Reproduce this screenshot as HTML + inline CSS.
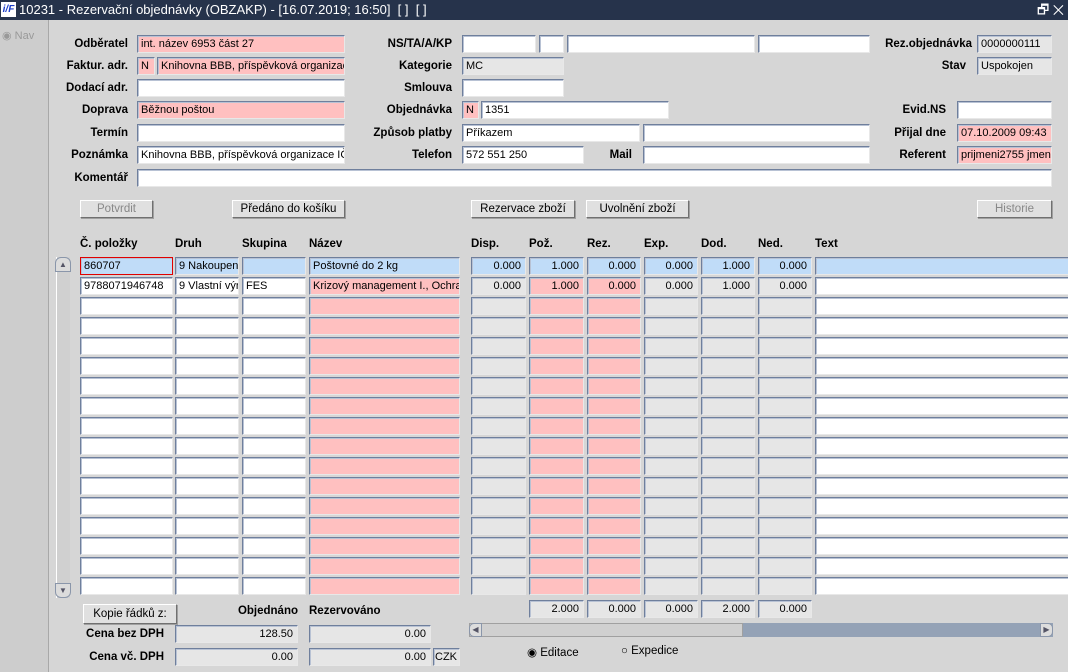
<!DOCTYPE html>
<html><head><meta charset="utf-8"><style>
*{box-sizing:border-box;margin:0;padding:0}
body{width:1068px;height:672px;overflow:hidden;background:#d6d6d6;font-family:"Liberation Sans",Arial,sans-serif;font-size:12px;position:relative;color:#000}
#title{position:absolute;left:0;top:0;width:1068px;height:20px;background:#26334b;color:#fff;font-size:13px;line-height:20px;padding-left:19px}
#logo{position:absolute;left:1px;top:2px;width:15px;height:15px;background:#fff;color:#1a3cc8;font-weight:bold;font-style:italic;font-size:10px;line-height:15px;text-align:center}
#left{position:absolute;left:0;top:20px;width:49px;height:652px;background:#cdcdcd;border-right:1px solid #a8a8a8}
.f{position:absolute;height:18px;background:#fff;border:1px solid;border-color:#6f7f9c #e8e8e8 #e8e8e8 #6f7f9c;box-shadow:inset 1px 1px 0 #b8c2d4;padding-left:3px;line-height:16px;font-size:11px;white-space:nowrap;overflow:hidden}
.p{background:#ffc0c0}.g{background:#e6e6e6}.b{background:#c0dcf8}
.r{text-align:right;padding-right:4px}
.l{position:absolute;font-weight:bold;font-size:11.5px;white-space:nowrap;line-height:18px}
.lr{text-align:right}
.btn{position:absolute;height:18px;background:#e0e0e0;border:1px solid;border-color:#fff #707070 #707070 #fff;box-shadow:1px 1px 0 #a0a0a0;text-align:center;line-height:16px;font-size:11.5px}
.dis{color:#888}
.h{position:absolute;top:238px;font-weight:bold;font-size:11.5px}
</style></head><body>
<div id="title"><div id="logo">i/F</div>10231 - Rezervační objednávky (OBZAKP) - [16.07.2019; 16:50] &nbsp;[ ] &nbsp;[ ]<span style="position:absolute;right:4px;top:0;font-size:13px">🗗 ✕</span></div>
<div id="left"><span style="position:absolute;left:2px;top:9px;color:#999;font-size:11px">◉ Nav</span></div>

<div class="l lr" style="left:40px;width:88px;top:35px">Odběratel</div><div class="f p" style="left:137px;top:35px;width:208px">int. název 6953 část 27</div>
<div class="l lr" style="left:40px;width:88px;top:57px">Faktur. adr.</div><div class="f p" style="left:137px;top:57px;width:18px">N</div><div class="f p" style="left:157px;top:57px;width:188px">Knihovna BBB, příspěvková organizac</div>
<div class="l lr" style="left:40px;width:88px;top:79px">Dodací adr.</div><div class="f" style="left:137px;top:79px;width:208px"></div>
<div class="l lr" style="left:40px;width:88px;top:101px">Doprava</div><div class="f p" style="left:137px;top:101px;width:208px">Běžnou poštou</div>
<div class="l lr" style="left:40px;width:88px;top:124px">Termín</div><div class="f" style="left:137px;top:124px;width:208px"></div>
<div class="l lr" style="left:40px;width:88px;top:146px">Poznámka</div><div class="f" style="left:137px;top:146px;width:208px">Knihovna BBB, příspěvková organizace IČ</div>
<div class="l lr" style="left:40px;width:88px;top:169px">Komentář</div><div class="f" style="left:137px;top:169px;width:915px"></div>

<div class="l lr" style="left:350px;width:102px;top:35px">NS/TA/A/KP</div>
<div class="f" style="left:462px;top:35px;width:74px"></div><div class="f" style="left:539px;top:35px;width:25px"></div><div class="f" style="left:567px;top:35px;width:188px"></div><div class="f" style="left:758px;top:35px;width:112px"></div>
<div class="l lr" style="left:350px;width:102px;top:57px">Kategorie</div><div class="f g" style="left:462px;top:57px;width:102px">MC</div>
<div class="l lr" style="left:350px;width:102px;top:79px">Smlouva</div><div class="f" style="left:462px;top:79px;width:102px"></div>
<div class="l lr" style="left:350px;width:102px;top:101px">Objednávka</div><div class="f p" style="left:462px;top:101px;width:17px">N</div><div class="f" style="left:481px;top:101px;width:188px">1351</div>
<div class="l lr" style="left:350px;width:102px;top:124px">Způsob platby</div><div class="f" style="left:462px;top:124px;width:178px">Příkazem</div><div class="f" style="left:643px;top:124px;width:227px"></div>
<div class="l lr" style="left:350px;width:102px;top:146px">Telefon</div><div class="f" style="left:462px;top:146px;width:122px">572 551 250</div>
<div class="l lr" style="left:590px;width:42px;top:146px">Mail</div><div class="f" style="left:643px;top:146px;width:227px"></div>

<div class="l lr" style="left:860px;width:112px;top:35px">Rez.objednávka</div><div class="f g" style="left:977px;top:35px;width:75px">0000000111</div>
<div class="l lr" style="left:860px;width:106px;top:57px">Stav</div><div class="f g" style="left:977px;top:57px;width:75px">Uspokojen</div>
<div class="l lr" style="left:860px;width:86px;top:101px">Evid.NS</div><div class="f" style="left:957px;top:101px;width:95px"></div>
<div class="l lr" style="left:860px;width:86px;top:124px">Přijal dne</div><div class="f p" style="left:957px;top:124px;width:95px">07.10.2009 09:43</div>
<div class="l lr" style="left:860px;width:86px;top:146px">Referent</div><div class="f p" style="left:957px;top:146px;width:95px">prijmeni2755 jmeno</div>

<div class="btn dis" style="left:80px;top:200px;width:73px">Potvrdit</div>
<div class="btn" style="left:232px;top:200px;width:113px">Předáno do košíku</div>
<div class="btn" style="left:471px;top:200px;width:104px">Rezervace zboží</div>
<div class="btn" style="left:586px;top:200px;width:103px">Uvolnění zboží</div>
<div class="btn dis" style="left:977px;top:200px;width:75px">Historie</div>

<div class="h" style="left:80px">Č. položky</div><div class="h" style="left:175px">Druh</div><div class="h" style="left:242px">Skupina</div><div class="h" style="left:309px">Název</div>
<div class="h" style="left:471px">Disp.</div><div class="h" style="left:529px">Pož.</div><div class="h" style="left:587px">Rez.</div><div class="h" style="left:644px">Exp.</div><div class="h" style="left:701px">Dod.</div><div class="h" style="left:758px">Ned.</div><div class="h" style="left:815px">Text</div>

<div style="position:absolute;left:56px;top:257px;width:14px;height:341px;background:#d0d0d0;border-left:1px solid #fff"></div>
<div style="position:absolute;left:55px;top:257px;width:16px;height:15px;border:1px solid #8a96aa;border-radius:6px 6px 0 0;background:#dcdcdc;font-size:8px;text-align:center;color:#556;line-height:13px">▲</div>
<div style="position:absolute;left:55px;top:583px;width:16px;height:15px;border:1px solid #8a96aa;border-radius:0 0 6px 6px;background:#dcdcdc;font-size:8px;text-align:center;color:#556;line-height:13px">▼</div>
<div id="rows"></div>

<div class="btn" style="left:83px;top:604px;width:94px;height:20px;line-height:18px">Kopie řádků z:</div>
<div class="l lr" style="left:180px;width:118px;top:602px">Objednáno</div><div class="l" style="left:309px;top:602px">Rezervováno</div>
<div class="l lr" style="left:60px;width:104px;top:625px">Cena bez DPH</div><div class="f g r" style="left:175px;top:625px;width:123px">128.50</div><div class="f g r" style="left:309px;top:625px;width:122px">0.00</div>
<div class="l lr" style="left:60px;width:104px;top:648px">Cena vč. DPH</div><div class="f g r" style="left:175px;top:648px;width:123px">0.00</div><div class="f g r" style="left:309px;top:648px;width:122px">0.00</div><div class="f g" style="left:433px;top:648px;width:27px;padding-left:1px">CZK</div>

<div class="f g r" style="left:529px;top:600px;width:55px">2.000</div><div class="f g r" style="left:587px;top:600px;width:54px">0.000</div><div class="f g r" style="left:644px;top:600px;width:54px">0.000</div><div class="f g r" style="left:701px;top:600px;width:54px">2.000</div><div class="f g r" style="left:758px;top:600px;width:54px">0.000</div>
<div style="position:absolute;left:469px;top:623px;width:584px;height:14px;background:#94a2b6"></div>
<div style="position:absolute;left:469px;top:623px;width:274px;height:14px;background:#d0d0d0;border:1px solid #a0a0a0"></div>
<div style="position:absolute;left:469px;top:623px;width:13px;height:14px;background:#ddd;border:1px solid #8a96aa;border-radius:5px 0 0 5px;font-size:8px;line-height:12px;text-align:center;color:#556">◀</div>
<div style="position:absolute;left:1040px;top:623px;width:13px;height:14px;background:#ddd;border:1px solid #8a96aa;border-radius:0 5px 5px 0;font-size:8px;line-height:12px;text-align:center;color:#556">▶</div>
<div style="position:absolute;left:527px;top:645px;font-size:11.5px">◉ Editace</div>
<div style="position:absolute;left:621px;top:645px;font-size:11.5px">○ Expedice</div>
<script>
var cols=[[80,93],[175,64],[242,64],[309,151],[471,55],[529,55],[587,54],[644,54],[701,54],[758,54],[815,260]];
var d=[["860707","9 Nakoupené","","Poštovné do 2 kg","0.000","1.000","0.000","0.000","1.000","0.000",""],["9788071946748","9 Vlastní výr","FES","Krizový management I., Ochran","0.000","1.000","0.000","0.000","1.000","0.000",""]];
var h="";
for(var r=0;r<17;r++){var y=257+r*20;for(var c=0;c<11;c++){var cl="f";
if(r==0){cl+=" b";}else{if(c==3||c==5||c==6)cl+=" p";else if(c==4||c>=7&&c<=9)cl+=" g";}
if(c>=4&&c<=9)cl+=" r";
var st="left:"+cols[c][0]+"px;top:"+y+"px;width:"+cols[c][1]+"px;";
if(r==0&&c==0)st+="border:1px solid #e00000;";
var t=(r<2?d[r][c]:"");
h+='<div class="'+cl+'" style="'+st+'">'+t+'</div>';}}
document.getElementById("rows").innerHTML=h;
</script>
</body></html>
